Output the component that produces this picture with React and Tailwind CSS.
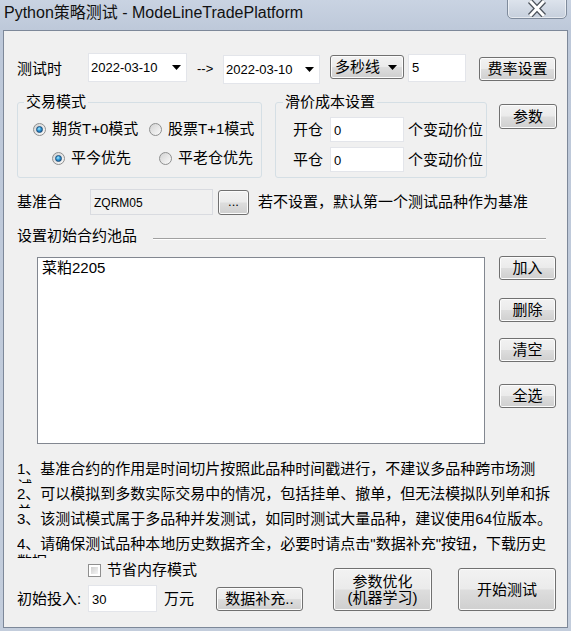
import React from 'react'

function Btn({ className = '', children }) {
  return (
    <div className={`flex items-center justify-center rounded-[3px] border border-[#707070] bg-[linear-gradient(180deg,#f2f2f2_0%,#ebebeb_48%,#dddddd_52%,#cfcfcf_100%)] leading-[16px] shadow-[inset_0_0_0_1px_#fcfcfc] ${className}`}>
      {children}
    </div>
  )
}

function Arrow() {
  return (
    <svg width="9" height="5" viewBox="0 0 9 5">
      <path d="M0 0 H9 L4.5 5 Z" fill="#000" />
    </svg>
  )
}

function DateBox({ className = '' }) {
  return (
    <div className={`flex items-center justify-between border border-[#e3e5ea] bg-white pl-[2px] pr-[5px] text-[13px] ${className}`}>
      <span>2022-03-10</span>
      <Arrow />
    </div>
  )
}

function Radio({ checked }) {
  return (
    <span className="flex h-[13px] w-[13px] shrink-0 items-center justify-center rounded-full border border-[#8e8f8f] bg-[linear-gradient(135deg,#d2d2d2,#fbfbfb)]">
      {checked && (
        <span className="h-[7px] w-[7px] rounded-full border border-[#1b4d7a] bg-[radial-gradient(circle_at_40%_35%,#a8ecff_0%,#2f97d6_45%,#0d4f8c_100%)]" />
      )}
    </span>
  )
}

function Option({ checked, label, className = '' }) {
  return (
    <div className={`flex items-center ${className}`}>
      <Radio checked={checked} />
      <span className="ml-[6px] leading-[18px]">{label}</span>
    </div>
  )
}

function CloseButton() {
  return (
    <div className="mr-[4px] mt-[-3px] flex h-[22px] w-[60px] items-center justify-center rounded-b-[5px] border border-[#7f8b9c] bg-[linear-gradient(180deg,#dfe5ee,#c6cfdc)] shadow-[inset_0_0_0_1px_rgba(255,255,255,0.55)]">
      <svg width="20" height="17" viewBox="0 0 20 17" className="mt-[1px]">
        <path d="M3 1 L17 16 M17 1 L3 16" stroke="#4d535c" strokeWidth="5.5" />
        <path d="M3 1 L17 16 M17 1 L3 16" stroke="#fff" strokeWidth="3" />
      </svg>
    </div>
  )
}

export default function App() {
  return (
    <div className="h-[631px] w-[571px] overflow-hidden bg-[linear-gradient(180deg,#c9d3e2_0%,#bdc8d9_5%,#c3cddc_100%)] font-['Liberation_Sans','Noto_Sans_CJK_SC',sans-serif] text-[15px] text-black">
      <div className="flex h-[30px] items-start justify-between">
        <div className="ml-[4px] mt-[4px] text-[16px] leading-[18px] text-[#111]">Python策略测试 - ModeLineTradePlatform</div>
        <CloseButton />
      </div>

      <div className="ml-[3px] h-[598px] w-[565px] border border-[#7d8899] bg-[#f0f0f0] pl-[13px]">
        {/* test period */}
        <div className="mt-[22px] flex h-[31px] items-center">
          <span className="w-[71px] leading-[18px]">测试时</span>
          <DateBox className="h-[29px] w-[99px] self-start" />
          <span className="ml-[10px] w-[26px] text-[13px]">--&gt;</span>
          <DateBox className="mt-[2px] h-[29px] w-[97px]" />
          <div className="ml-[10px] mt-[2px] flex h-[24px] w-[74px] items-center justify-between self-start rounded-[3px] border border-[#707070] bg-[linear-gradient(180deg,#f2f2f2_0%,#ebebeb_48%,#dddddd_52%,#cfcfcf_100%)] pl-[4px] pr-[6px] shadow-[inset_0_0_0_1px_#fcfcfc]">
            <span className="leading-[18px]">多秒线</span>
            <Arrow />
          </div>
          <div className="ml-[4px] mt-[1px] h-[28px] w-[58px] self-start border border-[#e3e5ea] bg-white pl-[3px] pt-[3px] text-[13px]">5</div>
          <Btn className="ml-[13px] mt-[4px] h-[24px] w-[77px] self-start">费率设置</Btn>
        </div>

        {/* group boxes */}
        <div className="mt-[10px] flex items-start">
          <fieldset className="h-[84px] w-[245px] rounded-[3px] border border-[#d5dfe5]">
            <legend className="ml-[6px] px-[2px] leading-[16px]">交易模式</legend>
            <div className="mt-[9px] flex h-[20px] items-center pl-[15px]">
              <Option checked label="期货T+0模式" className="w-[116px]" />
              <Option label="股票T+1模式" />
            </div>
            <div className="mt-[9px] flex h-[20px] items-center pl-[34px]">
              <Option checked label="平今优先" className="w-[107px]" />
              <Option label="平老仓优先" />
            </div>
          </fieldset>

          <fieldset className="ml-[13px] h-[84px] w-[212px] rounded-[3px] border border-[#d5dfe5]">
            <legend className="ml-[7px] px-[2px] leading-[16px]">滑价成本设置</legend>
            <div className="mt-[7px] flex h-[25px] items-center pl-[17px]">
              <span className="w-[37px] leading-[18px]">开仓</span>
              <div className="h-[25px] w-[74px] border border-[#e3e5ea] bg-white pl-[3px] pt-[3px] text-[13px]">0</div>
              <span className="ml-[4px] leading-[18px]">个变动价位</span>
            </div>
            <div className="mt-[5px] flex h-[25px] items-center pl-[17px]">
              <span className="w-[37px] leading-[18px]">平仓</span>
              <div className="h-[25px] w-[74px] border border-[#e3e5ea] bg-white pl-[3px] pt-[3px] text-[13px]">0</div>
              <span className="ml-[4px] leading-[18px]">个变动价位</span>
            </div>
          </fieldset>

          <Btn className="ml-[12px] mt-[10px] h-[25px] w-[58px]">参数</Btn>
        </div>

        {/* benchmark */}
        <div className="mt-[11px] flex h-[26px] items-center">
          <span className="w-[73px] leading-[18px]">基准合</span>
          <div className="h-[26px] w-[123px] border border-[#d9dbe0] bg-[#f0f0f0] pl-[3px] pt-[4px] text-[12px]">ZQRM05</div>
          <Btn className="ml-[5px] h-[25px] w-[31px] text-[13px]">...</Btn>
          <span className="ml-[9px] leading-[18px]">若不设置，默认第一个测试品种作为基准</span>
        </div>

        {/* pool title */}
        <div className="mt-[12px] flex h-[18px] w-[529px] items-center">
          <span className="leading-[18px]">设置初始合约池品</span>
          <div className="ml-[16px] mt-[4px] h-px flex-1 bg-[#a0a0a0] shadow-[0_1px_0_#fff]" />
        </div>

        {/* pool list */}
        <div className="mt-[12px] flex items-start">
          <div className="ml-[20px] h-[187px] w-[448px] border border-[#828790] bg-white px-[4px] pt-[1px] leading-[18px]">菜粕2205</div>
          <div className="ml-[14px] flex flex-col">
            <Btn className="mt-[-1px] h-[24px] w-[57px]">加入</Btn>
            <Btn className="mt-[18px] h-[24px] w-[57px]">删除</Btn>
            <Btn className="mt-[16px] h-[24px] w-[57px]">清空</Btn>
            <Btn className="mt-[22px] h-[24px] w-[57px]">全选</Btn>
          </div>
        </div>

        {/* notes: fixed-height labels, the wrapped line is cut off as in the dialog */}
        <div className="mt-[16px]">
          <div className="h-[23px] overflow-hidden whitespace-nowrap leading-[18px]">
            1、基准合约的作用是时间切片按照此品种时间戳进行，不建议多品种跨市场测<br />试。
          </div>
          <div className="mt-[2px] h-[23px] overflow-hidden whitespace-nowrap leading-[18px]">
            2、可以模拟到多数实际交易中的情况，包括挂单、撤单，但无法模拟队列单和拆<br />单。
          </div>
          <div className="mt-[2px] h-[23px] overflow-hidden whitespace-nowrap leading-[18px]">
            3、该测试模式属于多品种并发测试，如同时测试大量品种，建议使用64位版本。
          </div>
          <div className="mt-[2px] h-[23px] overflow-hidden whitespace-nowrap leading-[18px]">
            4、请确保测试品种本地历史数据齐全，必要时请点击"数据补充"按钮，下载历史<br />数据。
          </div>
        </div>

        {/* bottom */}
        <div className="mt-[4px] flex items-start">
          <div>
            <div className="flex h-[16px] items-center pl-[71px]">
              <span className="h-[13px] w-[13px] border border-[#8f8f8f] bg-white p-[2px]">
                <span className="block h-full w-full bg-[linear-gradient(135deg,#cfcfcf,#f4f4f4)]" />
              </span>
              <span className="ml-[6px] leading-[18px]">节省内存模式</span>
            </div>
            <div className="mt-[7px] flex items-start">
              <span className="w-[71px] leading-[27px]">初始投入:</span>
              <div className="h-[27px] w-[69px] border border-[#e3e5ea] bg-white pl-[3px] pt-[4px] text-[13px]">30</div>
              <span className="w-[59px] pl-[7px] leading-[27px]">万元</span>
              <Btn className="mt-[2px] h-[24px] w-[87px]">数据补充..</Btn>
            </div>
          </div>
          <Btn className="ml-[30px] mt-[6px] h-[43px] w-[99px] flex-col">
            <span>参数优化</span>
            <span>(机器学习)</span>
          </Btn>
          <Btn className="ml-[26px] mt-[6px] h-[43px] w-[98px]">开始测试</Btn>
        </div>
      </div>
    </div>
  )
}
